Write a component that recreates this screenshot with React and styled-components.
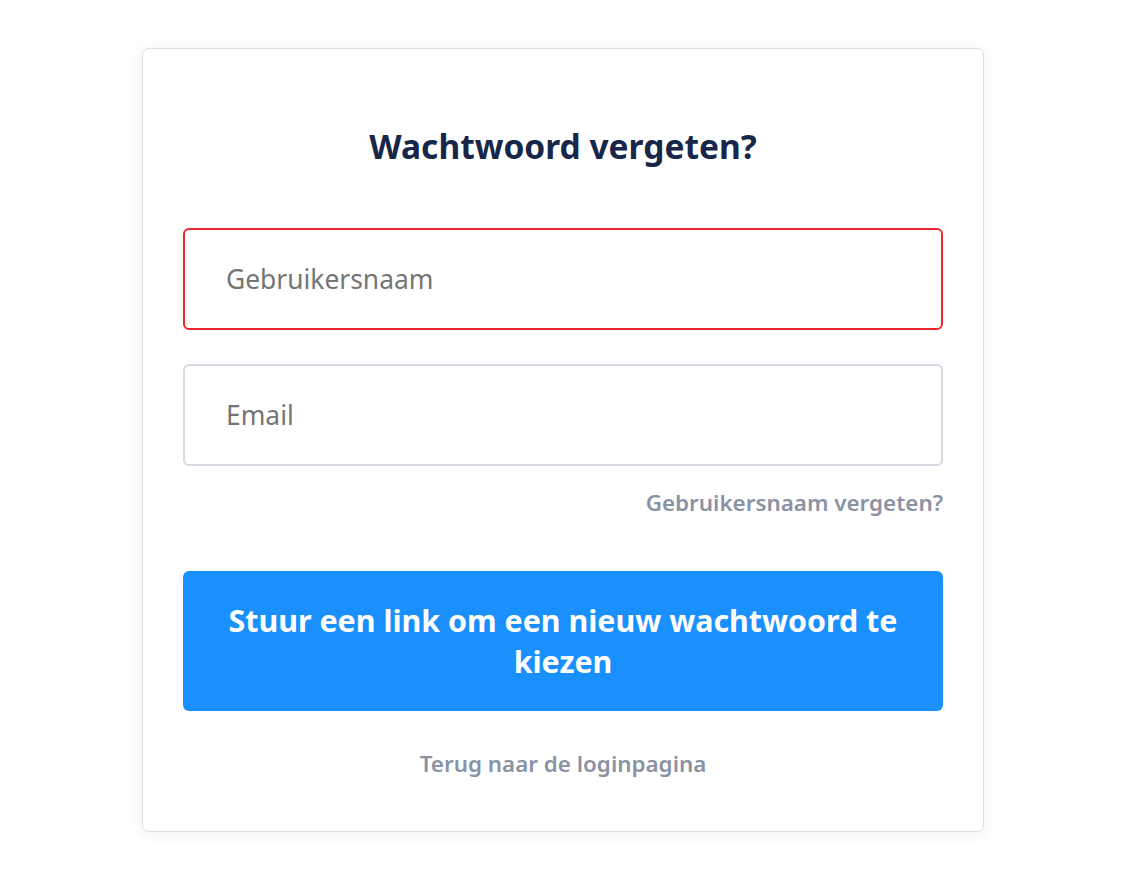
import React from "react"
import styled, { createGlobalStyle } from "styled-components"

const GlobalStyle = createGlobalStyle`
  body {
    margin: 0;
    background: #fff;
    font-family: "Noto Sans", "Open Sans", sans-serif;
  }
`

const Page = styled.div`
  display: flex;
  justify-content: center;
  padding: 48px 0 37px 5px;
`

const Card = styled.form`
  width: 842px;
  box-sizing: border-box;
  padding: 74px 40px 52px;
  background: #fff;
  border: 1px solid #dcdfe6;
  border-radius: 7px;
  box-shadow: 0 2px 14px rgba(30, 40, 70, 0.07);
  display: flex;
  flex-direction: column;
`

const Title = styled.h1`
  margin: 0 0 57px;
  text-align: center;
  font-size: 33.5px;
  line-height: 46px;
  padding-bottom: 2px;
  font-weight: 700;
  color: #172649;
`

const Field = styled.input`
  height: 102px;
  box-sizing: border-box;
  margin-bottom: ${p => p.$gap || 0}px;
  padding: 0 41px;
  border: 2px solid ${p => (p.$error ? "#f0262d" : "#d8d9e3")};
  border-radius: 6px;
  font-family: inherit;
  font-size: 26.4px;
  color: #333;
  outline: none;
  &::placeholder {
    color: #757575;
  }
`

const SmallLink = styled.a`
  align-self: ${p => p.$align || "center"};
  font-size: 22.4px;
  line-height: 30px;
  font-weight: 600;
  color: #8a93a5;
  text-decoration: none;
  cursor: pointer;
`

const SubmitButton = styled.button`
  margin: ${p => p.$top}px 0 38px;
  height: 140px;
  padding: 0 40px;
  border: none;
  border-radius: 6px;
  background: #1a90ff;
  color: #fff;
  font-family: inherit;
  font-size: 30.4px;
  line-height: 41px;
  font-weight: 700;
  cursor: pointer;
`

export default function App() {
  return (
    <>
      <GlobalStyle />
      <Page>
        <Card onSubmit={e => e.preventDefault()}>
          <Title>Wachtwoord vergeten?</Title>
          <Field $error $gap={34} placeholder="Gebruikersnaam" />
          <Field $gap={22} placeholder="Email" />
          <SmallLink $align="flex-end">Gebruikersnaam vergeten?</SmallLink>
          <SubmitButton type="submit" $top={53}>
            Stuur een link om een nieuw wachtwoord te kiezen
          </SubmitButton>
          <SmallLink>Terug naar de loginpagina</SmallLink>
        </Card>
      </Page>
    </>
  )
}
